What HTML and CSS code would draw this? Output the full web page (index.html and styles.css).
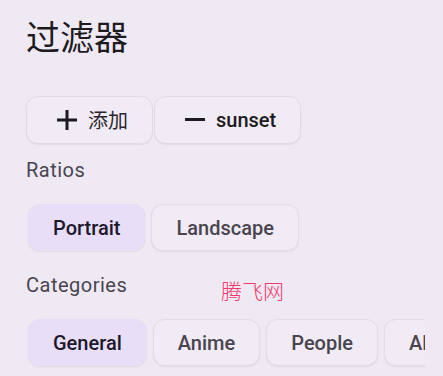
FILE: index.html
```html
<!DOCTYPE html>
<html>
<head>
<meta charset="utf-8">
<link rel="stylesheet" href="styles.css">
</head>
<body>
<div class="page">
  <h1 class="title">过滤器</h1>
  <div class="btn-row">
    <button class="btn">
      <svg class="icon" viewBox="0 0 24 24"><rect x="2" y="10.5" width="20" height="3" fill="#1d1b20"/><rect x="10.5" y="2" width="3" height="20" fill="#1d1b20"/></svg>
      <span class="btn-text cjk">添加</span>
    </button>
    <button class="btn">
      <svg class="icon" viewBox="0 0 24 24"><rect x="2" y="10" width="20" height="3" fill="#1d1b20"/></svg>
      <span class="btn-text">sunset</span>
    </button>
  </div>
  <div class="label label-ratios">Ratios</div>
  <div class="chip-scroll">
    <div class="chips">
      <div class="chip selected">Portrait</div>
      <div class="chip">Landscape</div>
    </div>
  </div>
  <div class="label label-cat">Categories</div>
  <div class="chip-scroll clip">
    <div class="chips">
      <div class="chip selected">General</div>
      <div class="chip">Anime</div>
      <div class="chip">People</div>
      <div class="chip">All</div>
    </div>
  </div>
  <div class="watermark">腾飞网</div>
</div>
</body>
</html>
```
FILE: styles.css
```css
html, body {
  margin: 0;
  padding: 0;
  background: #efe9f4;
}
body {
  width: 443px;
  height: 376px;
  overflow: hidden;
  font-family: Roboto, "Noto Sans CJK SC", sans-serif;
}
.page {
  position: relative;
  padding: 0 18px 0 26px;
}
.title {
  margin: 0;
  padding-top: 15px;
  font-family: "Noto Sans CJK SC", sans-serif;
  font-weight: 400;
  font-size: 34px;
  line-height: 42px;
  color: #1d1b20;
}
.btn-row {
  display: flex;
  gap: 1px;
  margin-top: 39px;
}
.btn {
  display: flex;
  align-items: center;
  height: 48px;
  padding: 0 24px 0 28px;
  margin: 0;
  box-sizing: border-box;
  background: #f1ebf6;
  border: 1px solid #e2dbe7;
  border-radius: 12px;
  box-shadow: 0 1px 1px rgba(0,0,0,0.06);
  font-family: Roboto, "Noto Sans CJK SC", sans-serif;
  color: #1d1b20;
}
.icon {
  width: 24px;
  height: 24px;
  margin-right: 9px;
  flex: none;
}
.btn-text {
  font-size: 20px;
  font-weight: 500;
  line-height: 24px;
}
.btn-text.cjk {
  font-family: "Noto Sans CJK SC", sans-serif;
  font-weight: 400;
  font-size: 20px;
  color: #2a272e;
}
.label {
  font-size: 20px;
  line-height: 28px;
  letter-spacing: 0.5px;
  color: #49454f;
}
.label-ratios {
  margin-top: 12px;
}
.label-cat {
  margin-top: 18px;
}
.chip-scroll {
  margin-top: 18px;
  width: 399px;
  overflow: hidden;
}
.chips {
  display: flex;
  gap: 6px;
  padding: 2px;
}
.chip {
  flex: none;
  height: 47px;
  box-sizing: border-box;
  padding: 0 24px;
  display: flex;
  align-items: center;
  border-radius: 12px;
  background: #f1ebf6;
  border: 1px solid #e4dde9;
  box-shadow: 0 1px 2px rgba(0,0,0,0.07);
  font-size: 20px;
  font-weight: 500;
  color: #49454f;
}
.chip.selected {
  background: #e8def8;
  border-color: #e8def8;
  color: #1d192b;
}
.watermark {
  position: absolute;
  left: 221px;
  top: 275px;
  font-family: "Noto Sans CJK SC", sans-serif;
  font-weight: 300;
  font-size: 21px;
  line-height: 30px;
  color: #f23a6a;
}
```
